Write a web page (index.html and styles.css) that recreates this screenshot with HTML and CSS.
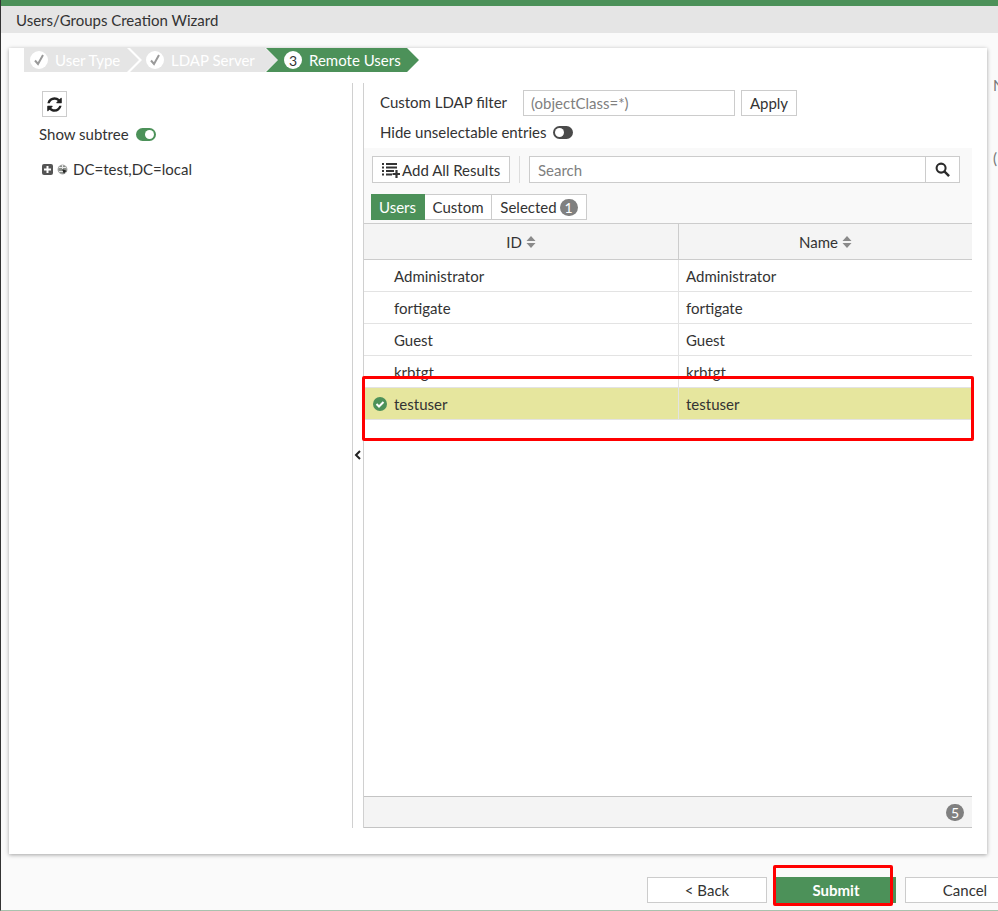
FILE: index.html
```html
<!DOCTYPE html>
<html lang="en">
<head>
<meta charset="utf-8">
<title>Users/Groups Creation Wizard</title>
<link rel="stylesheet" href="styles.css">
</head>
<body>
<div class="app">
  <div class="topbar"></div>
  <div class="title">Users/Groups Creation Wizard</div>
  <div class="content">
    <div class="panel">
      <div class="steps">
        <div class="step step-first done"><span class="step-dot"><svg viewBox="0 0 18 18" width="18" height="18"><path d="M5 9.5l3 3.5 5-9" fill="none" stroke="#9a9a9a" stroke-width="2"/></svg></span>User Type</div>
        <div class="step step-second done"><span class="step-dot"><svg viewBox="0 0 18 18" width="18" height="18"><path d="M5 9.5l3 3.5 5-9" fill="none" stroke="#9a9a9a" stroke-width="2"/></svg></span>LDAP Server</div>
        <div class="step step-third"><span class="step-dot step-num">3</span>Remote Users</div>
      </div>
      <div class="split">
        <div class="left">
          <button class="btn refresh"><svg viewBox="0 0 1792 1792" width="17" height="17"><path fill="#222" d="M1639 1056q0 5-1 7-64 268-268 434.5t-478 166.5q-146 0-282.5-55t-243.5-157l-129 129q-19 19-45 19t-45-19-19-45v-448q0-26 19-45t45-19h448q26 0 45 19t19 45-19 45l-137 137q71 66 161 102t187 36q134 0 250-65t186-179q11-17 53-117 8-23 30-23h192q13 0 22.5 9.5t9.5 22.5zm25-800v448q0 26-19 45t-45 19h-448q-26 0-45-19t-19-45 19-45l138-138q-148-137-349-137-134 0-250 65t-186 179q-11 17-53 117-8 23-30 23h-199q-13 0-22.5-9.5t-9.5-22.5v-7q65-268 270-434.5t480-166.5q146 0 284 55.5t245 156.5l130-129q19-19 45-19t45 19 19 45z"/></svg></button>
          <div class="subtree">Show subtree<span class="toggle on"></span></div>
          <div class="tree">
            <svg class="plus" viewBox="0 0 11 11" width="11" height="11"><rect width="11" height="11" rx="2" fill="#555"/><path d="M5.5 2v7M2 5.5h7" stroke="#fff" stroke-width="2"/></svg>
            <svg class="globe" viewBox="0 0 11 11" width="11" height="11"><circle cx="5.5" cy="5.5" r="4.5" fill="#8a8f8a" stroke="#aaa"/><path d="M2 3.5h7M2 7.5h4M5.5 1v5" stroke="#e8e8e8" stroke-width="1"/><path d="M5 5l5 2-2 1-1 2z" fill="#222"/></svg>
            DC=test,DC=local
          </div>
        </div>
        <div class="splitter"><span class="collapse"><svg viewBox="0 0 8 10" width="8" height="10"><path d="M6 1L2 5l4 4" fill="none" stroke="#222" stroke-width="2"/></svg></span></div>
        <div class="right">
          <div class="filter-row">
            <span class="filter-label">Custom LDAP filter</span>
            <input class="filter-input" placeholder="(objectClass=*)">
            <button class="btn apply">Apply</button>
          </div>
          <div class="hide-row">Hide unselectable entries<span class="toggle off"></span></div>
          <div class="toolbar">
            <div class="tool-row">
              <button class="btn add-all"><svg viewBox="0 0 18 16" width="18" height="16"><path d="M0 2h2M4 2h11M0 5.500h2M4 5.500h11M0 9h2M4 9h8M0 12.500h2M4 12.500h6" stroke="#333" stroke-width="2" fill="none"/><path d="M14.500 8v8M10.500 12h8" stroke="#333" stroke-width="2.200"/></svg>Add All Results</button>
              <span class="tool-sep"></span>
              <div class="search">
                <input class="search-input" placeholder="Search">
                <button class="search-btn"><svg viewBox="0 0 16 16" width="15" height="15"><circle cx="6.500" cy="6.500" r="4.800" fill="none" stroke="#2b2b2b" stroke-width="2.200"/><path d="M10 10l5 5" stroke="#2b2b2b" stroke-width="2.600"/></svg></button>
              </div>
            </div>
            <div class="tabs">
              <span class="tab tab-active">Users</span>
              <span class="tab">Custom</span>
              <span class="tab">Selected<span class="badge">1</span></span>
            </div>
          </div>
          <div class="thead">
            <div class="th th-id">ID<svg class="sort" viewBox="0 0 10 12" width="10" height="12"><path d="M5 0l4.500 5h-9zM5 12L.5 7h9z" fill="#8a8a8a"/></svg></div>
            <div class="th">Name<svg class="sort" viewBox="0 0 10 12" width="10" height="12"><path d="M5 0l4.500 5h-9zM5 12L.5 7h9z" fill="#8a8a8a"/></svg></div>
          </div>
          <div class="tbody">
            <div class="tr"><div class="td td-id">Administrator</div><div class="td">Administrator</div></div>
            <div class="tr"><div class="td td-id">fortigate</div><div class="td">fortigate</div></div>
            <div class="tr"><div class="td td-id">Guest</div><div class="td">Guest</div></div>
            <div class="tr"><div class="td td-id">krbtgt</div><div class="td">krbtgt</div></div>
            <div class="tr tr-selected"><div class="td td-id"><svg class="check" viewBox="0 0 14 14" width="14" height="14"><circle cx="7" cy="7" r="7" fill="#4c9159"/><path d="M3.500 7l2.500 2.500 4.500-4.500" fill="none" stroke="#fff" stroke-width="2"/></svg>testuser</div><div class="td">testuser</div></div>
          </div>
          <div class="tfoot"><span class="badge">5</span></div>
        </div>
      </div>
    </div>
    <div class="side"><span class="side-m">N</span><span class="side-c">(</span></div>
  </div>
  <div class="footer">
    <button class="btn action">&lt; Back</button>
    <button class="btn action primary">Submit</button>
    <button class="btn action">Cancel</button>
  </div>
  <div class="highlight highlight-row"></div>
  <div class="highlight highlight-submit"></div>
</div>
</body>
</html>
```
FILE: styles.css
```css
* { box-sizing: border-box; }
html, body { margin: 0; padding: 0; }
body { font-family: Lato, "Open Sans", sans-serif; font-size: 15px; color: #333; background: #fafafa; }
.app { position: relative; width: 998px; height: 911px; overflow: hidden; display: flex; flex-direction: column; border-left: 1px solid #333; border-bottom: 1px solid #a9c2ae; background: #fafafa; }
.topbar { height: 6px; flex: none; background: #4c9159; }
.title { height: 27px; flex: none; padding-left: 15px; line-height: 28px; background: #e5e5e5; color: #333; }
.content { flex: none; height: 821px; padding: 15px 0 0 8px; display: flex; }
.panel { flex: none; width: 978px; height: 806px; background: #fff; box-shadow: 0 1px 4px rgba(0,0,0,.35); }
.side { flex: 1; position: relative; overflow: hidden; color: #777; }
.side-m { position: absolute; left: 6px; top: 28px; }
.side-c { position: absolute; left: 6px; top: 101px; }

.steps { display: flex; height: 24px; padding-left: 15px; }
.step { height: 24px; display: flex; align-items: center; font-size: 15px; color: #fff; flex: none; }
.step-dot { width: 18px; height: 18px; border-radius: 50%; background: #fff; display: flex; align-items: center; justify-content: center; margin-right: 7px; flex: none; }
.step.done { background: #e5e5e5; }
.step-first { width: 115px; padding-left: 6px; clip-path: polygon(0 0, 103px 0, 115px 12px, 103px 24px, 0 24px); }
.step-second { width: 148px; margin-left: -9px; padding-left: 16px; clip-path: polygon(0 0, 135px 0, 148px 12px, 135px 24px, 0 24px, 12px 12px); }
.step-third { width: 153px; margin-left: -12px; padding-left: 18px; background: #4c9159; clip-path: polygon(0 0, 141px 0, 153px 12px, 141px 24px, 0 24px, 12px 12px); }
.step-num { color: #4c9159; font-size: 14px; color: #333; }

.split { display: flex; height: 745px; margin-top: 11px; }
.left { width: 343px; flex: none; padding: 8px 0 0 30px; }
.btn { font: inherit; color: #333; background: #fff; border: 1px solid #ccc; padding: 0; cursor: pointer; }
.refresh { width: 25px; height: 26px; margin-left: 3px; display: flex; align-items: center; justify-content: center; }
.subtree { height: 18px; margin-top: 8px; line-height: 18px; display: flex; align-items: center; }
.toggle { position: relative; display: inline-block; width: 20px; height: 13px; border-radius: 7px; margin-left: 7px; }
.toggle::after { content: ""; position: absolute; top: 2px; width: 9px; height: 9px; border-radius: 50%; background: #fff; }
.toggle.on { background: #4c9159; }
.toggle.on::after { right: 2px; }
.toggle.off { background: #4a4a4a; }
.toggle.off::after { left: 2px; }
.tree { display: flex; align-items: center; height: 20px; margin: 16px 0 0 3px; }
.plus { margin-right: 4px; flex: none; }
.globe { margin-right: 5px; flex: none; }

.splitter { width: 12px; flex: none; border: 1px solid #d0d0d0; border-width: 0 1px; position: relative; }
.collapse { position: absolute; left: 1px; top: 367px; line-height: 0; }

.right { width: 608px; flex: none; display: flex; flex-direction: column; }
.filter-row { display: flex; align-items: center; height: 26px; margin-top: 7px; padding-left: 16px; }
.filter-label { width: 143px; flex: none; margin-top: -2px; }
.filter-input { width: 212px; height: 26px; border: 1px solid #ccc; padding: 0 7px; font: inherit; color: #333; outline: none; }
.filter-input::placeholder, .search-input::placeholder { color: #808080; opacity: 1; }
.apply { width: 56px; height: 26px; margin-left: 6px; }
.hide-row { display: flex; align-items: center; height: 18px; margin-top: 7px; padding-left: 16px; }
.toolbar { margin-top: 7px; height: 75px; background: #f9f9f9; padding: 8px 12px 0 8px; }
.tool-row { display: flex; align-items: center; height: 27px; }
.add-all { width: 138px; height: 27px; display: flex; align-items: center; padding-left: 9px; background: #fff; }
.add-all svg { margin-right: 2px; margin-top: 1px; flex: none; }
.tool-sep { width: 1px; height: 27px; background: #ddd; margin: 0 9px; flex: none; }
.search { display: flex; width: 431px; height: 27px; border: 1px solid #ccc; background: #fff; }
.search-input { flex: 1; min-width: 0; border: 0; outline: none; font: inherit; padding: 0 8px; color: #333; }
.search-btn { width: 34px; flex: none; border: 0; border-left: 1px solid #ccc; background: #fff; padding: 0; display: flex; align-items: center; justify-content: center; }
.tabs { display: flex; height: 26px; margin: 11px 0 0 -1px; }
.tab { display: flex; align-items: center; justify-content: center; height: 26px; padding: 0 8px; background: #fff; border: 1px solid #ccc; border-left-width: 0; }
.tab:nth-child(3) { width: 95px; }
.tab-active { width: 54px; background: #4c9159; border-color: #4c9159; color: #fff; }
.tab:nth-child(2) { width: 67px; }
.badge { display: inline-flex; align-items: center; justify-content: center; width: 18px; height: 17px; border-radius: 9px; background: #808080; color: #fff; font-size: 14px; margin-left: 3px; }
.thead { display: flex; height: 37px; flex: none; background: #f4f4f4; border: 1px solid #ccc; border-width: 1px 0; }
.th { flex: 1; display: flex; align-items: center; justify-content: center; min-width: 0; }
.th-id { width: 315px; flex: none; border-right: 1px solid #ccc; }
.sort { margin-left: 4px; }
.tbody { flex: 1; min-height: 0; }
.tr { display: flex; height: 32px; border-bottom: 1px solid #e3e3e3; }
.td { flex: 1; display: flex; align-items: center; padding-left: 7px; min-width: 0; }
.td-id { width: 315px; flex: none; padding-left: 30px; border-right: 1px solid #e3e3e3; position: relative; }
.tr-selected { background: #e6e69e; }
.check { position: absolute; left: 9px; top: 9px; }
.tfoot { height: 32px; flex: none; background: #f4f4f4; border: 1px solid #c4c4c4; border-width: 1px 0; display: flex; align-items: center; justify-content: flex-end; padding-right: 8px; }

.footer { flex: 1; display: flex; padding: 23px 0 0 646px; gap: 9px; overflow: hidden; }
.action { width: 120px; height: 26px; flex: none; }
.primary { background: #4c9159; border-color: #4c9159; color: #fff; font-weight: 700; }

.highlight { position: absolute; border: 3px solid #f00; border-radius: 2px; pointer-events: none; }
.highlight-row { left: 361px; top: 376px; width: 612px; height: 65px; }
.highlight-submit { left: 772px; top: 865px; width: 120px; height: 41px; }
```
